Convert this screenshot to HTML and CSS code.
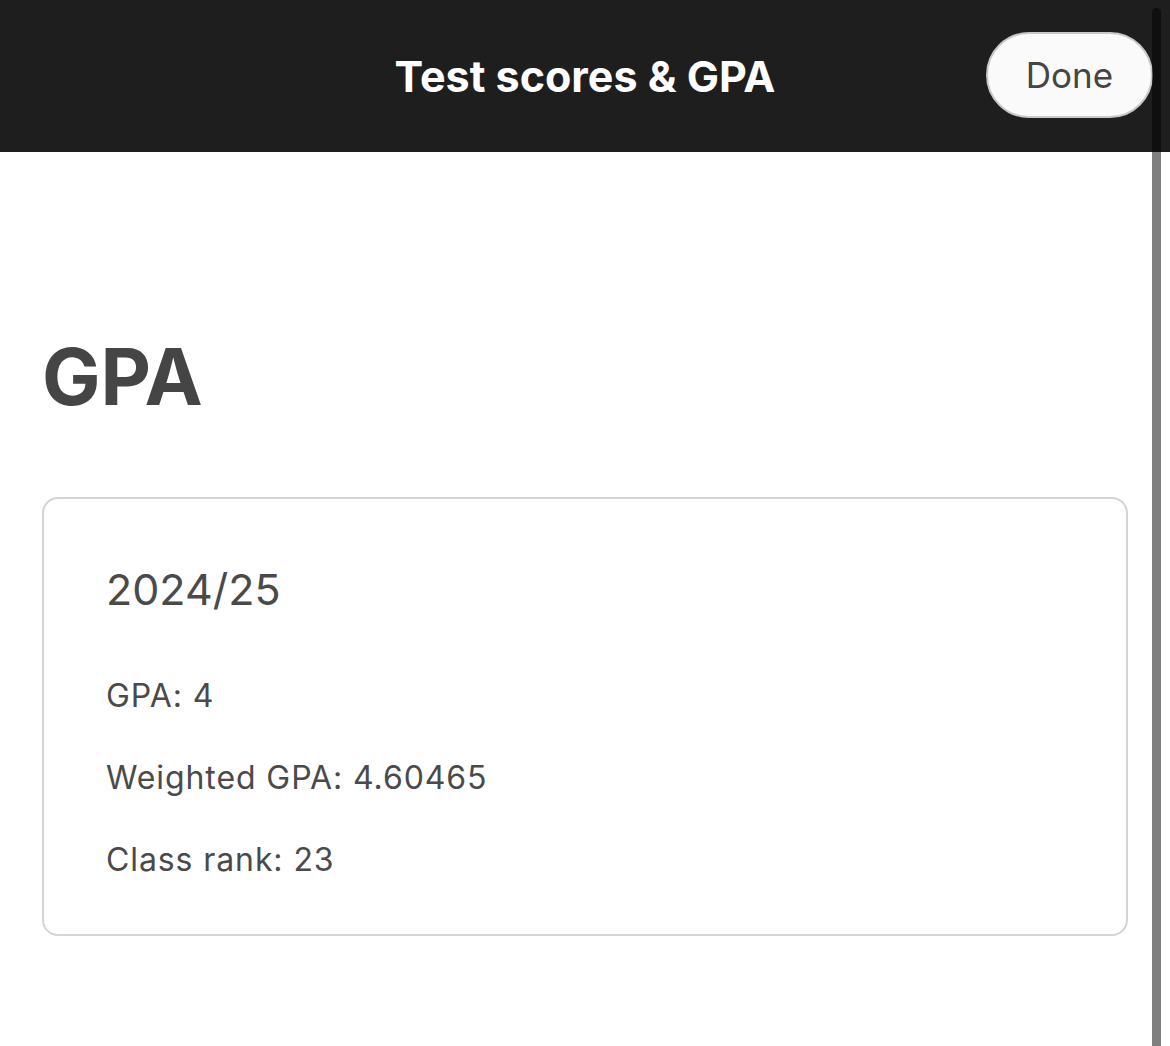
FILE: index.html
```html
<!DOCTYPE html>
<html lang="en">
<head>
<meta charset="utf-8">
<title>Test scores &amp; GPA</title>
<link rel="stylesheet" href="styles.css">
</head>
<body>
<header class="topbar">
  <h1 class="topbar-title">Test scores &amp; GPA</h1>
  <button class="done-btn">Done</button>
</header>
<main class="content">
  <h2 class="section-title">GPA</h2>
  <section class="card">
    <h3 class="card-year">2024/25</h3>
    <p class="card-line">GPA: 4</p>
    <p class="card-line">Weighted GPA: 4.60465</p>
    <p class="card-line">Class rank: 23</p>
  </section>
</main>
<div class="scroll-thumb"></div>
</body>
</html>
```

FILE: styles.css
```css
html, body {
  margin: 0;
  padding: 0;
  background: #ffffff;
  font-family: "Inter", "Lato", sans-serif;
  color: #4a4a4a;
}
body {
  height: 1046px;
  overflow: hidden;
  position: relative;
}
.topbar {
  height: 152px;
  background: #1e1e1e;
  display: flex;
  align-items: center;
  justify-content: center;
  position: relative;
}
.topbar-title {
  margin: 0;
  color: #ffffff;
  font-weight: 700;
  font-size: 43px;
}
.done-btn {
  position: absolute;
  right: 17px;
  top: 32px;
  width: 167px;
  height: 86px;
  border-radius: 43px;
  background: #fafafa;
  border: 2px solid #c8c8c8;
  font-family: inherit;
  font-size: 35px;
  color: #454545;
  padding: 0;
}
.content {
  padding: 0 42px;
}
.section-title {
  margin: 0;
  padding-top: 180px;
  font-size: 78px;
  font-weight: 700;
  line-height: 90px;
  color: #454545;
}
.card {
  margin-top: 75px;
  border: 2px solid #d4d4d4;
  border-radius: 16px;
  padding: 64px 64px 53px 62px;
}
.card-year {
  margin: 0 0 60px;
  font-size: 43px;
  font-weight: 400;
  line-height: 52px;
}
.card-line {
  margin: 0 0 40px;
  font-size: 32px;
  letter-spacing: 0.9px;
  line-height: 42px;
}
.card-line:last-child {
  margin-bottom: 0;
}
.scroll-thumb {
  position: absolute;
  top: 8px;
  bottom: 0;
  right: 9px;
  width: 9px;
  border-radius: 5px 5px 0 0;
  background: rgba(0, 0, 0, 0.5);
}
```
